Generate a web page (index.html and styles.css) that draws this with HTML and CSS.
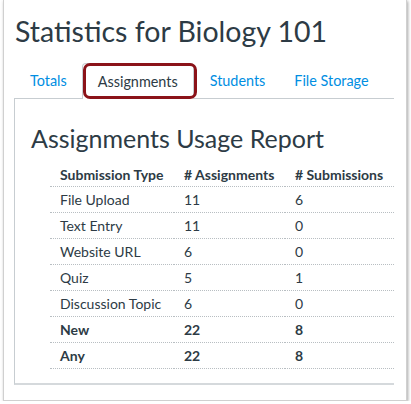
FILE: index.html
```html
<!DOCTYPE html>
<html>
<head>
<meta charset="utf-8">
<link rel="stylesheet" href="styles.css">
</head>
<body>
<div class="frame">
  <h1 class="title">Statistics for Biology 101</h1>
  <ul class="tabs">
    <li class="tab"><a>Totals</a></li>
    <li class="tab active"><a>Assignments</a><span class="highlight"></span></li>
    <li class="tab"><a>Students</a></li>
    <li class="tab"><a>File Storage</a></li>
  </ul>
  <div class="panel">
    <h2 class="report">Assignments Usage Report</h2>
    <table class="stats">
      <thead>
        <tr><th class="c1">Submission Type</th><th class="c2"># Assignments</th><th class="c3"># Submissions</th></tr>
      </thead>
      <tbody>
        <tr><td>File Upload</td><td>11</td><td>6</td></tr>
        <tr><td>Text Entry</td><td>11</td><td>0</td></tr>
        <tr><td>Website URL</td><td>6</td><td>0</td></tr>
        <tr><td>Quiz</td><td>5</td><td>1</td></tr>
        <tr><td>Discussion Topic</td><td>6</td><td>0</td></tr>
        <tr class="bold"><td>New</td><td>22</td><td>8</td></tr>
        <tr class="bold"><td>Any</td><td>22</td><td>8</td></tr>
      </tbody>
    </table>
  </div>
</div>
</body>
</html>
```

FILE: styles.css
```css
html, body {
  margin: 0;
  padding: 0;
  background: #ffffff;
}
body {
  font-family: Lato, "Open Sans", sans-serif;
  color: #2d3b45;
}
.frame {
  margin-left: 3px;
  width: 404px;
  height: 401px;
  box-sizing: border-box;
  border: 1px solid #d0d0d0;
  border-top: none;
  box-shadow: 1px 1px 3px rgba(0, 0, 0, 0.35);
  padding-left: 10px;
}
.title {
  margin: 0;
  padding-top: 13px;
  padding-left: 1px;
  font-size: 28.5px;
  line-height: 36px;
  font-weight: 400;
}
.tabs {
  list-style: none;
  margin: 14px 0 0 0;
  padding: 0;
  display: flex;
  height: 35px;
  align-items: stretch;
}
.tab {
  position: relative;
  display: flex;
  align-items: center;
  padding: 0 15px 0 16px;
  font-size: 14.4px;
  color: #008ee2;
  box-sizing: border-box;
}
.tab.active {
  color: #2d3b45;
  border: 1px solid #c7cdd1;
  border-bottom: none;
  border-radius: 4px 4px 0 0;
  padding: 0 15px 0 15px;
  background: #fff;
  margin-bottom: -1px;
  z-index: 1;
  margin-right: 0;
}
.tab:nth-child(3) { padding-right: 13px; }
.highlight {
  position: absolute;
  left: 0px;
  top: -1px;
  right: -4px;
  bottom: 0px;
  border: 3px solid #8b1319;
  border-radius: 7px;
}
.panel {
  width: 380px;
  height: 287px;
  box-sizing: border-box;
  margin-left: 0;
  border-left: 1px solid #c7cdd1;
  border-top: 1px solid #c7cdd1;
  border-bottom: 2px solid #d5d9dc;
  padding-left: 16px;
}
.report {
  margin: 0;
  padding-top: 24px;
  font-size: 25px;
  line-height: 30px;
  font-weight: 400;
}
.stats {
  margin-left: 19px;
  margin-top: 9px;
  width: 344px;
  border-collapse: collapse;
  font-size: 14px;
}
.stats th {
  text-align: left;
  font-weight: 700;
  height: 24px;
  padding: 0 0 0 10px;
  border-bottom: 1px dotted #b8bec2;
  vertical-align: middle;
}
.stats td {
  height: 25px;
  padding: 0 0 0 10px;
  border-bottom: 1px dotted #b8bec2;
  vertical-align: middle;
}
.stats .c1 { width: 114px; }
.stats .c2 { width: 101px; }
.stats .bold td { font-weight: 700; }
```
